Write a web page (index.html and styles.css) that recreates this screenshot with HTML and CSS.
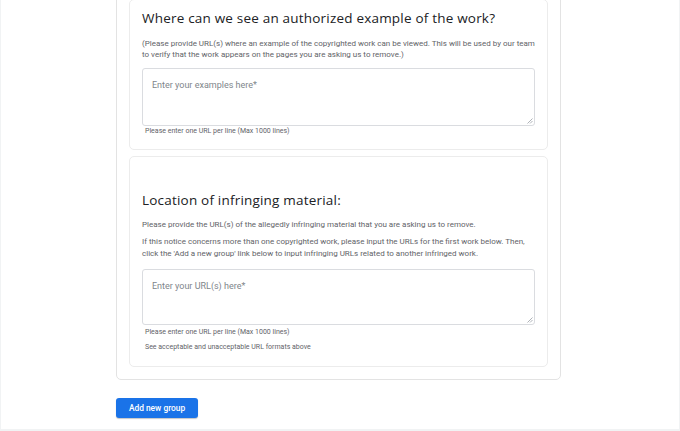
FILE: index.html
```html
<!DOCTYPE html>
<html>
<head>
<meta charset="utf-8">
<link rel="stylesheet" href="styles.css">
</head>
<body>
<div class="page">
  <div class="outer">
    <div class="card card-first">
      <h2 class="title">Where can we see an authorized example of the work?</h2>
      <p class="desc desc-first">(Please provide URL(s) where an example of the copyrighted work can be viewed. This will be used by our team<br>to verify that the work appears on the pages you are asking us to remove.)</p>
      <div class="field">
        <span class="placeholder">Enter your examples here*</span>
        <svg class="grip" width="7" height="7" viewBox="0 0 7 7"><path d="M6.5 1.5L1.5 6.5M6.5 4L4 6.5" stroke="#9aa0a6" stroke-width="0.8" fill="none"/></svg>
      </div>
      <p class="hint">Please enter one URL per line (Max 1000 lines)</p>
    </div>
    <div class="card card-second">
      <h2 class="title">Location of infringing material:</h2>
      <p class="desc desc-a">Please provide the URL(s) of the allegedly infringing material that you are asking us to remove.</p>
      <p class="desc desc-b">If this notice concerns more than one copyrighted work, please input the URLs for the first work below. Then,<br>click the 'Add a new group' link below to input infringing URLs related to another infringed work.</p>
      <div class="field field-second">
        <span class="placeholder">Enter your URL(s) here*</span>
        <svg class="grip" width="7" height="7" viewBox="0 0 7 7"><path d="M6.5 1.5L1.5 6.5M6.5 4L4 6.5" stroke="#9aa0a6" stroke-width="0.8" fill="none"/></svg>
      </div>
      <p class="hint hint-first">Please enter one URL per line (Max 1000 lines)</p>
      <p class="hint hint-second">See acceptable and unacceptable URL formats above</p>
    </div>
  </div>
  <button class="add-btn">Add new group</button>
</div>
</body>
</html>
```
FILE: styles.css
```css
html, body {
  margin: 0;
  padding: 0;
}
body {
  background: #f1f3f4;
  font-family: Roboto, "Liberation Sans", Arial, sans-serif;
  color: #202124;
}
.page {
  background: #ffffff;
  width: 678px;
  height: 429px;
  margin-left: 1px;
  overflow: hidden;
  padding-left: 115px;
  box-sizing: border-box;
}
.outer {
  width: 445px;
  box-sizing: border-box;
  margin-top: -22px;
  border: 1px solid #e3e3e3;
  border-radius: 5px;
  padding: 20px 12px 12px 12px;
  display: flex;
  flex-direction: column;
  gap: 6px;
}
.card {
  border: 1px solid #ececec;
  border-radius: 5px;
  padding: 0 12px 0 12px;
  box-sizing: border-box;
}
.card-first {
  padding-top: 9px;
  height: 151px;
}
.card-second {
  padding-top: 34px;
  height: 211px;
}
.title {
  margin: 0;
  font-family: "Open Sans", Roboto, sans-serif;
  font-weight: 400;
  font-size: 13.5px;
  letter-spacing: 0.2px;
  line-height: 18px;
  color: #202124;
  white-space: nowrap;
}
.desc {
  margin: 0;
  font-size: 8px;
  color: #5f6368;
  white-space: nowrap;
}
.desc-first {
  margin-top: 10.5px;
  line-height: 11px;
}
.desc-a {
  margin-top: 10px;
  line-height: 11px;
}
.desc-b {
  margin-top: 6px;
  line-height: 11.5px;
}
.field {
  position: relative;
  margin-top: 8px;
  height: 58px;
  border: 1px solid #dadce0;
  border-radius: 3px;
  box-sizing: border-box;
  padding: 10px 9px;
}
.field-second {
  margin-top: 9.5px;
  height: 56px;
}
.placeholder {
  display: block;
  font-size: 9px;
  line-height: 12px;
  color: #80868b;
}
.grip {
  position: absolute;
  right: 1px;
  bottom: 1px;
}
.hint {
  margin: 0;
  padding-left: 3px;
  font-size: 7px;
  line-height: 10px;
  color: #5f6368;
  white-space: nowrap;
}
.hint-first {
  margin-top: 2px;
}
.hint-second {
  margin-top: 5.3px;
}
.add-btn {
  display: block;
  margin-top: 18px;
  width: 82px;
  height: 20px;
  padding: 0;
  border: none;
  border-radius: 3px;
  background: #1a73e8;
  color: #ffffff;
  font-family: Roboto, "Liberation Sans", sans-serif;
  font-weight: 500;
  font-size: 8.4px;
  box-shadow: 0 1px 1px rgba(60, 64, 67, 0.3);
}
```
